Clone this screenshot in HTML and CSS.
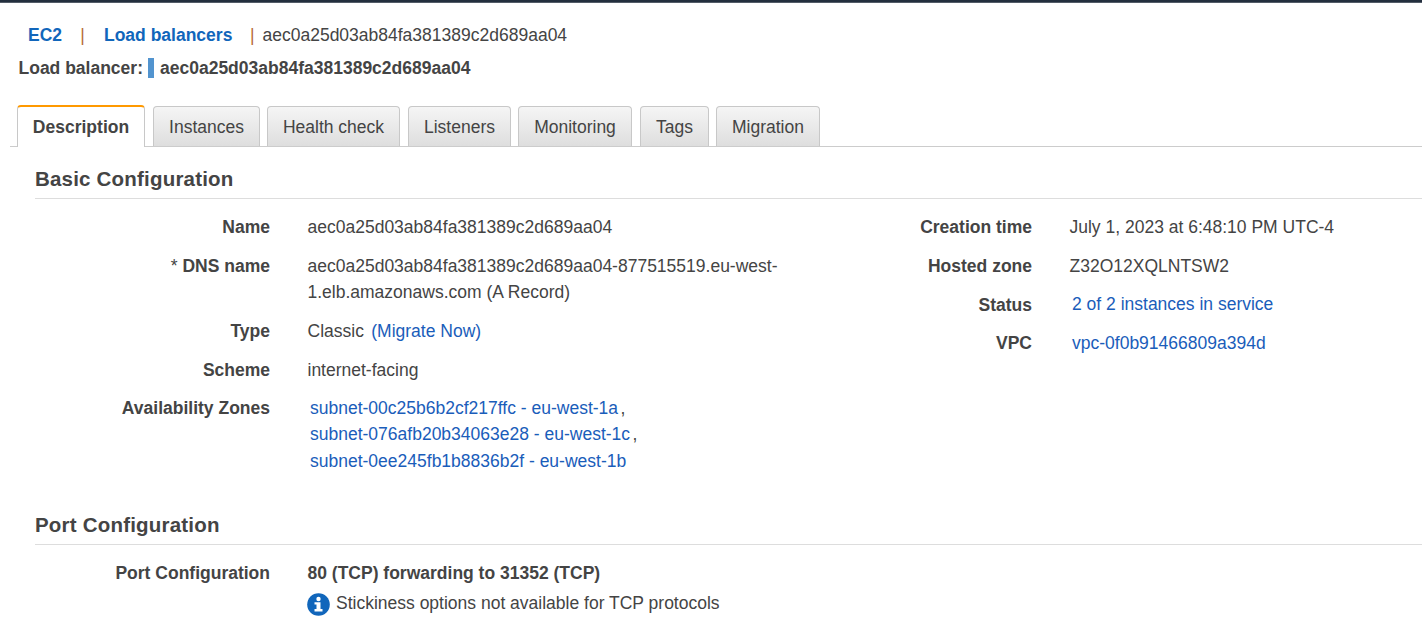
FILE: index.html
```html
<!DOCTYPE html>
<html lang="en">
<head>
<meta charset="utf-8">
<title>Load balancer details</title>
<link rel="stylesheet" href="styles.css">
</head>
<body>
<div class="topbar"></div>
<nav class="breadcrumb">
  <a class="crumb-ec2" href="#">EC2</a><span class="sep">|</span><a class="crumb-lb" href="#">Load balancers</a><span class="sep sep-last">|</span><span class="crumb-id">aec0a25d03ab84fa381389c2d689aa04</span>
</nav>
<header class="title"><span>Load balancer:</span><i class="marker"></i><span>aec0a25d03ab84fa381389c2d689aa04</span></header>
<div class="tabs">
  <div class="tab active">Description</div>
  <div class="tab instances">Instances</div>
  <div class="tab health">Health check</div>
  <div class="tab listeners">Listeners</div>
  <div class="tab monitoring">Monitoring</div>
  <div class="tab tags">Tags</div>
  <div class="tab migration">Migration</div>
</div>
<main>
  <section class="basic">
    <h2>Basic Configuration</h2>
    <div class="columns">
      <dl>
        <dt>Name</dt><dd>aec0a25d03ab84fa381389c2d689aa04</dd>
        <dt><span class="star">*</span> DNS name</dt><dd>aec0a25d03ab84fa381389c2d689aa04-877515519.eu-west-<br>1.elb.amazonaws.com (A Record)</dd>
        <dt>Type</dt><dd>Classic <a class="link" href="#">(Migrate Now)</a></dd>
        <dt>Scheme</dt><dd>internet-facing</dd>
        <dt>Availability Zones</dt><dd><a class="link" href="#">subnet-00c25b6b2cf217ffc - eu-west-1a</a>,<br><a class="link" href="#">subnet-076afb20b34063e28 - eu-west-1c</a>,<br><a class="link" href="#">subnet-0ee245fb1b8836b2f - eu-west-1b</a></dd>
      </dl>
      <dl class="right">
        <dt>Creation time</dt><dd>July 1, 2023 at 6:48:10 PM UTC-4</dd>
        <dt>Hosted zone</dt><dd>Z32O12XQLNTSW2</dd>
        <dt>Status</dt><dd class="status"><a class="link" href="#">2 of 2 instances in service</a></dd>
        <dt>VPC</dt><dd><a class="link" href="#">vpc-0f0b91466809a394d</a></dd>
      </dl>
    </div>
  </section>
  <section>
    <h2>Port Configuration</h2>
    <dl>
      <dt>Port Configuration</dt>
      <dd>
        <strong>80 (TCP) forwarding to 31352 (TCP)</strong>
        <div class="note">
          <svg class="info" viewBox="0 0 23 23"><circle cx="11.5" cy="11.5" r="11.3" fill="#1166bb"/><circle cx="11.5" cy="6" r="2.2" fill="#fff"/><path d="M7.5 9.3h6v6.7h2v2.4h-8V16h2v-4.5h-2z" fill="#fff"/></svg>
          <span>Stickiness options not available for TCP protocols</span>
        </div>
      </dd>
    </dl>
  </section>
</main>
</body>
</html>
```
FILE: styles.css
```css
* { box-sizing: border-box; }
body {
  margin: 0;
  height: 620px;
  overflow: hidden;
  background: #fff;
  color: #444;
  font: 17.5px/26px "Liberation Sans", Arial, sans-serif;
}
a { text-decoration: none; }
.topbar { height: 3px; background: #232f3e; border-bottom: 1px solid #535c68; }
.breadcrumb { display: flex; height: 26px; margin-top: 19px; padding-left: 28px; white-space: nowrap; }
.breadcrumb a { color: #1166bb; font-weight: bold; }
.crumb-ec2 { width: 52.3px; }
.crumb-lb { width: 146px; }
.sep { width: 23.7px; color: #b86b35; }
.sep-last { width: 12.5px; }
.title { display: flex; align-items: center; height: 26px; margin-top: 7px; padding-left: 18.5px; font-weight: bold; }
.marker { width: 6px; height: 20px; margin: 0 6px 0 5px; background: #5294cf; }
.tabs { display: flex; align-items: flex-end; height: 42px; margin: 24px 0 0 10px; padding-left: 7px; border-bottom: 1px solid #ccc; }
.tab {
  height: 40px;
  margin-right: 8px;
  border: 1px solid #c8c8c8;
  border-bottom: 0;
  border-radius: 4px 4px 0 0;
  background: linear-gradient(#f5f5f5, #dedede);
  line-height: 40px;
  text-align: center;
}
.tab.active { width: 128px; height: 42px; margin-bottom: -1px; border-top: 2px solid #f90; background: #fff; font-weight: bold; line-height: 41px; }
.instances { width: 107px; margin-right: 7px; }
.health { width: 133px; }
.listeners { width: 103px; margin-right: 7px; }
.monitoring { width: 114px; }
.tags { width: 69px; margin-right: 7px; }
.migration { width: 104px; }
main { padding: 19px 0 0 35px; }
.basic { height: 346px; }
h2 { height: 33px; margin: 0 0 15px; border-bottom: 1px solid #ddd; font-size: 20.5px; line-height: 26px; letter-spacing: .2px; }
.columns { display: grid; grid-template-columns: 762px 1fr; padding-top: .35px; line-height: 26.25px; }
dl { display: grid; grid-template-columns: 235px 1fr; column-gap: 37.5px; row-gap: 12.4px; align-content: start; margin: 0; }
dt { font-weight: bold; text-align: right; }
dd { margin: 0; white-space: nowrap; }
.star { font-weight: normal; }
.status { margin-top: -1px; }
.link { padding: 0 2.5px; color: #1a5dba; }
.note { display: flex; align-items: center; gap: 6px; margin: 4px 0 0 -.5px; }
.info { width: 23px; height: 23px; margin-top: 3px; }
```
